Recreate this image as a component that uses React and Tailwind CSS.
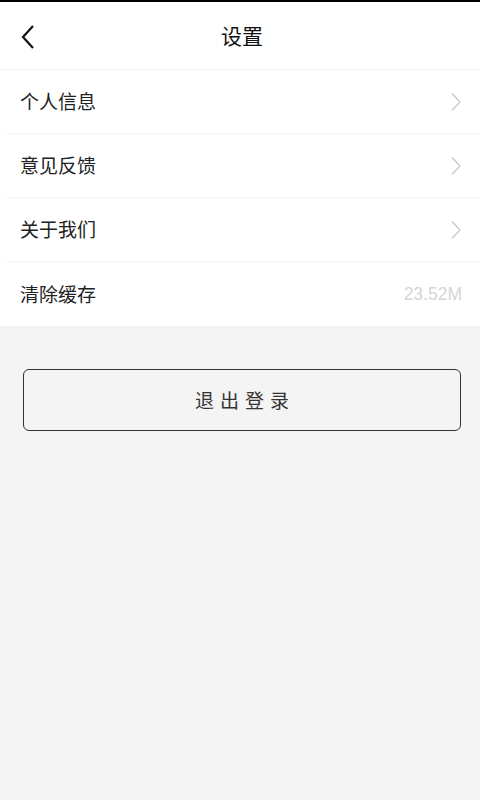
import React from "react";

const font = { fontFamily: '"Noto Sans CJK SC", "Liberation Sans", sans-serif' };

function Chevron() {
  return (
    <svg width="12" height="20" viewBox="0 0 12 20" fill="none" className="shrink-0">
      <path d="M2 1.5L10 10L2 18.5" stroke="#c8c8c8" strokeWidth="1.3" />
    </svg>
  );
}

function Row({ label, right, last }) {
  return (
    <div className={`flex h-16 items-center justify-between pl-4 pr-[18px] ${last ? "" : "border-b border-[#f6f6f6]"}`}>
      <span className="text-[19px] text-[#222]">{label}</span>
      {right}
    </div>
  );
}

export default function App() {
  return (
    <div className="flex min-h-[800px] flex-col bg-[#f4f4f4]" style={font}>
      <div className="h-[2px] bg-black" />
      {/* Header */}
      <div className="relative flex h-[68px] items-center justify-center border-b border-[#f3f3f3] bg-white">
        <button className="absolute left-[20px] top-[22px]">
          <svg width="16" height="26" viewBox="0 0 16 26" fill="none">
            <path d="M13 2L3 13L13 24" stroke="#111" strokeWidth="2.2" />
          </svg>
        </button>
        <span className="pl-1 text-[21px] text-[#111]">设置</span>
      </div>

      {/* Settings list */}
      <div className="bg-white pl-1">
        <Row label="个人信息" right={<Chevron />} />
        <Row label="意见反馈" right={<Chevron />} />
        <Row label="关于我们" right={<Chevron />} />
        <Row
          label="清除缓存"
          last
          right={<span className="text-[17.5px] text-[#d6d6d6]" style={{ fontFamily: '"Liberation Sans", sans-serif' }}>23.52M</span>}
        />
      </div>

      {/* Logout */}
      <div className="pl-[23px] pr-[19px] pt-[43px]">
        <button className="flex h-[62px] w-full items-center justify-center rounded-[6px] border border-[#333] pl-[6px] text-[19px] tracking-[6px] text-[#333]">
          退出登录
        </button>
      </div>
    </div>
  );
}
